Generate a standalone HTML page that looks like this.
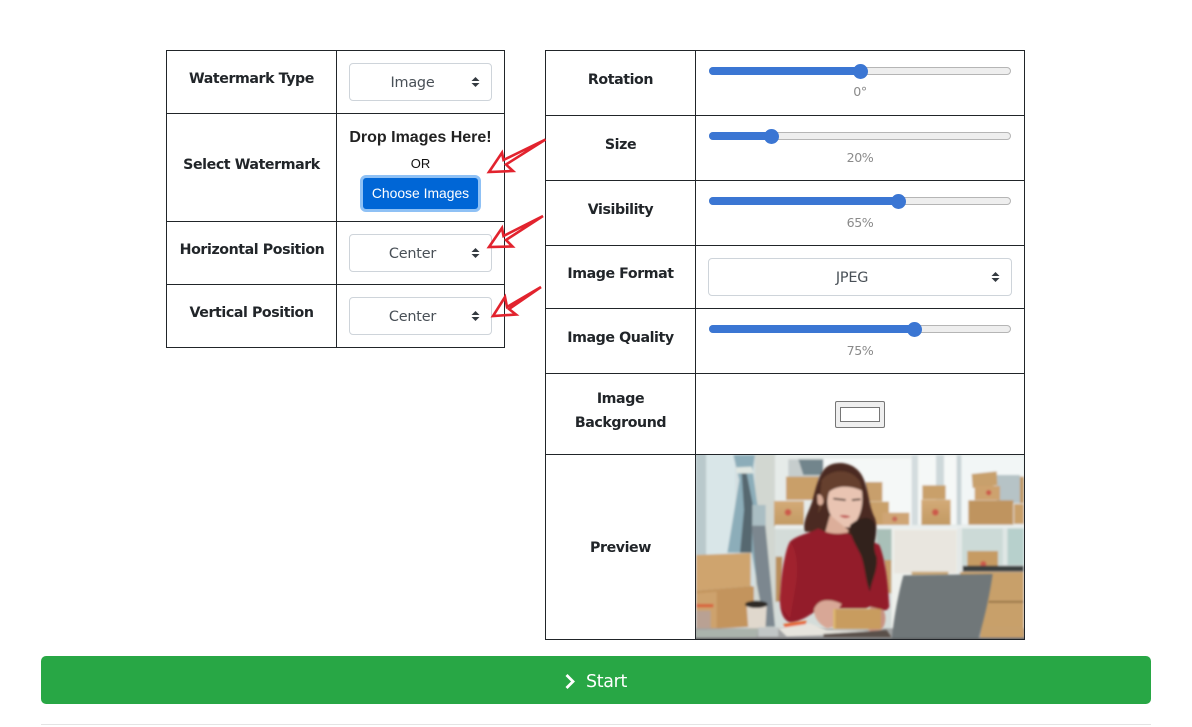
<!DOCTYPE html>
<html lang="en"><head><meta charset="utf-8"><title>Watermark</title>
<style>
html,body{margin:0;padding:0;background:#fff;}
body{width:1192px;height:727px;position:relative;overflow:hidden;font-family:"DejaVu Sans","Liberation Sans",sans-serif;color:#212529;}
.l{position:absolute;background:#212529;}
.t{position:absolute;text-align:center;font-weight:bold;font-size:14.2px;line-height:24px;letter-spacing:-.42px;white-space:nowrap;color:#212529;}
.sel{position:absolute;box-sizing:border-box;background:#fff;border:1px solid #ced4da;border-radius:4px;color:#495057;font-size:14.4px;letter-spacing:-.2px;text-align:center;line-height:38px;}
.sel svg{position:absolute;right:11px;top:12px;}
.tr{position:absolute;height:8px;left:709px;width:302px;box-sizing:border-box;background:#eee;border:1px solid #b5b5b5;border-radius:5px;}
.fill{position:absolute;left:709px;height:8px;background:#3b76d3;border-radius:5px 0 0 5px;}
.th{position:absolute;width:15px;height:15px;border-radius:50%;background:#3b76d3;}
.v{position:absolute;left:709px;width:302px;text-align:center;font-size:12.6px;line-height:18px;letter-spacing:-.45px;color:#8a8a8a;margin-top:1px;}
</style></head><body>

<!-- left table -->
<div class="l" style="left:166px;top:50px;width:339px;height:1px"></div>
<div class="l" style="left:166px;top:113px;width:339px;height:1px"></div>
<div class="l" style="left:166px;top:221px;width:339px;height:1px"></div>
<div class="l" style="left:166px;top:284px;width:339px;height:1px"></div>
<div class="l" style="left:166px;top:347px;width:339px;height:1px"></div>
<div class="l" style="left:166px;top:50px;width:1px;height:298px"></div>
<div class="l" style="left:336px;top:50px;width:1px;height:298px"></div>
<div class="l" style="left:504px;top:50px;width:1px;height:298px"></div>

<div class="t" style="left:167px;width:169px;top:67px">Watermark Type</div>
<div class="t" style="left:167px;width:169px;top:153px">Select Watermark</div>
<div class="t" style="left:167.500px;width:169px;top:238px">Horizontal Position</div>
<div class="t" style="left:167px;width:169px;top:301px">Vertical Position</div>

<div class="sel" style="left:349px;top:63px;width:143px;height:38px;padding-right:16px">Image<svg width="9" height="12" viewBox="0 0 9 12"><path d="M4.5 1L8.500 5H.5zM4.500 11L8.500 7H.5z" fill="#343a40"/></svg></div>
<div class="sel" style="left:349px;top:234px;width:143px;height:38px;padding-right:16px">Center<svg width="9" height="12" viewBox="0 0 9 12"><path d="M4.5 1L8.500 5H.5zM4.500 11L8.500 7H.5z" fill="#343a40"/></svg></div>
<div class="sel" style="left:349px;top:297px;width:143px;height:38px;padding-right:16px">Center<svg width="9" height="12" viewBox="0 0 9 12"><path d="M4.5 1L8.500 5H.5zM4.500 11L8.500 7H.5z" fill="#343a40"/></svg></div>

<div style="position:absolute;left:337px;width:167px;top:126px;text-align:center;font:bold 16px/24px 'Liberation Sans',sans-serif;color:#222;white-space:nowrap">Drop Images Here!</div>
<div style="position:absolute;left:337px;width:167px;top:155px;text-align:center;font:13px/18px 'Liberation Sans',sans-serif;color:#111">OR</div>
<div style="position:absolute;left:360px;top:175px;width:121px;height:37px;box-sizing:border-box;background:#0066d6;border:3px solid #8fc1f5;border-radius:6px;color:#fff;text-align:center;font:13.900px/30px 'Liberation Sans',sans-serif">Choose Images</div>

<!-- right table -->
<div class="l" style="left:545px;top:50px;width:480px;height:1px"></div>
<div class="l" style="left:545px;top:115px;width:480px;height:1px"></div>
<div class="l" style="left:545px;top:180px;width:480px;height:1px"></div>
<div class="l" style="left:545px;top:245px;width:480px;height:1px"></div>
<div class="l" style="left:545px;top:308px;width:480px;height:1px"></div>
<div class="l" style="left:545px;top:373px;width:480px;height:1px"></div>
<div class="l" style="left:545px;top:454px;width:480px;height:1px"></div>
<div class="l" style="left:545px;top:639px;width:480px;height:1px"></div>
<div class="l" style="left:545px;top:50px;width:1px;height:590px"></div>
<div class="l" style="left:695px;top:50px;width:1px;height:590px"></div>
<div class="l" style="left:1024px;top:50px;width:1px;height:590px"></div>

<div class="t" style="left:546px;width:149px;top:68px">Rotation</div>
<div class="t" style="left:546px;width:149px;top:133px">Size</div>
<div class="t" style="left:546px;width:149px;top:198px">Visibility</div>
<div class="t" style="left:546px;width:149px;top:262px">Image Format</div>
<div class="t" style="left:546px;width:149px;top:326px">Image Quality</div>
<div class="t" style="left:546px;width:149px;top:387px">Image</div>
<div class="t" style="left:546px;width:149px;top:411px">Background</div>
<div class="t" style="left:546px;width:149px;top:536px">Preview</div>

<div class="tr" style="top:67px"></div><div class="fill" style="top:67px;width:151px"></div><div class="th" style="left:853px;top:63.500px"></div><div class="v" style="top:82px">0°</div>
<div class="tr" style="top:132px"></div><div class="fill" style="top:132px;width:62px"></div><div class="th" style="left:763.500px;top:128.500px"></div><div class="v" style="top:148px">20%</div>
<div class="tr" style="top:197px"></div><div class="fill" style="top:197px;width:189px"></div><div class="th" style="left:890.500px;top:193.500px"></div><div class="v" style="top:213px">65%</div>
<div class="sel" style="left:708px;top:258px;width:304px;height:38px;padding-right:16px">JPEG<svg width="9" height="12" viewBox="0 0 9 12"><path d="M4.5 1L8.500 5H.5zM4.500 11L8.500 7H.5z" fill="#343a40"/></svg></div>
<div class="tr" style="top:325px"></div><div class="fill" style="top:325px;width:205px"></div><div class="th" style="left:906.500px;top:321.500px"></div><div class="v" style="top:341px">75%</div>

<div style="position:absolute;left:835px;top:401px;width:50px;height:27px;box-sizing:border-box;background:#efefef;border:1px solid #767676;border-radius:2px"></div>
<div style="position:absolute;left:840px;top:407px;width:40px;height:15px;box-sizing:border-box;background:#fff;border:1px solid #767676"></div>

<!-- preview image (drawn illustration) -->
<div style="position:absolute;left:696px;top:455px;width:328px;height:184px;overflow:hidden">
<svg style="position:absolute;left:-6px;top:-5px" width="340" height="195" viewBox="0 0 1020 585">
<defs>
<filter id="b" x="-5%" y="-5%" width="110%" height="110%"><feGaussianBlur stdDeviation="3"/></filter>
<linearGradient id="box" x1="0" x2="0" y1="0" y2="1"><stop offset="0" stop-color="#d3aa77"/><stop offset="1" stop-color="#c29a63"/></linearGradient>
</defs>
<g filter="url(#b)">
<rect x="0" y="0" width="1020" height="585" fill="#eef2f2"/>
<!-- wall -->
<rect x="0" y="0" width="260" height="585" fill="#d3dfe1"/>
<rect x="18" y="0" width="30" height="320" fill="#b9c9cc"/>
<rect x="50" y="0" width="85" height="320" fill="#d9e6e8"/>
<rect x="195" y="0" width="60" height="540" fill="#d2d7d1"/>
<!-- curtain -->
<path d="M130 15H195L188 60L200 150L215 240L235 340L255 530H225L185 308H112L130 200L148 90Z" fill="#8cadb9"/>
<path d="M155 70L170 70L188 160L185 308H150L162 180Z" fill="#566770"/>
<path d="M185 225L226 225L255 530H225L200 400Z" fill="#7c878f"/>
<path d="M138 52L185 50L190 70L140 70Z" fill="#dfe6e1"/>
<rect x="187" y="165" width="40" height="62" fill="#aabec3"/>
<!-- shelves background -->
<rect x="255" y="15" width="750" height="215" fill="#e6ebe9"/>
<rect x="295" y="28" width="105" height="60" fill="#c6cdcd"/>
<path d="M325 28H400V75H340Z" fill="#72858c"/>
<rect x="400" y="25" width="270" height="200" fill="#f5f8f7"/>
<rect x="685" y="18" width="120" height="205" fill="#f5f8f7"/>
<rect x="810" y="18" width="192" height="205" fill="#f2f6f6"/>
<rect x="665" y="15" width="18" height="215" fill="#d3dcde"/>
<rect x="738" y="15" width="24" height="215" fill="#cdd8da"/>
<rect x="800" y="15" width="14" height="215" fill="#c8d3d6"/>
<rect x="920" y="75" width="70" height="85" fill="#b6c3c6"/>
<!-- boxes top -->
<rect x="288" y="80" width="100" height="70" fill="#c99f69"/>
<rect x="252" y="153" width="90" height="76" fill="url(#box)"/>
<circle cx="294" cy="187" r="10" fill="#cc5a4c"/>
<rect x="525" y="96" width="52" height="58" fill="#c89f6c"/>
<rect x="535" y="155" width="62" height="70" fill="#c9a06b"/>
<rect x="578" y="188" width="80" height="38" fill="#cfa574"/>
<circle cx="614" cy="207" r="8" fill="#c86a5a"/>
<rect x="697" y="106" width="70" height="42" fill="#c9a06b"/>
<rect x="694" y="149" width="88" height="76" fill="url(#box)"/>
<circle cx="736" cy="187" r="10" fill="#cc5a4c"/>
<path d="M845 72L920 64L922 106L848 114Z" fill="#c8a06c"/>
<rect x="854" y="108" width="76" height="42" fill="#cda26e"/>
<circle cx="896" cy="128" r="8" fill="#cc5a4c"/>
<rect x="835" y="151" width="135" height="73" fill="#bf945f"/>
<rect x="972" y="162" width="30" height="60" fill="#c9a06b"/>
<rect x="990" y="80" width="12" height="80" fill="#c19860"/>
<!-- shelf lower -->
<rect x="255" y="225" width="747" height="12" fill="#e9eeed"/>
<rect x="255" y="237" width="350" height="300" fill="#d4dcd9"/>
<rect x="560" y="237" width="45" height="100" fill="#a9c0b8"/>
<rect x="257" y="320" width="20" height="135" fill="#b98f5b"/>
<rect x="582" y="330" width="22" height="100" fill="#c59c68"/>
<rect x="605" y="235" width="205" height="300" fill="#eef0ec"/>
<rect x="612" y="240" width="188" height="130" fill="#e9e6df"/>
<rect x="802" y="235" width="16" height="300" fill="#e3e8e7"/>
<rect x="816" y="235" width="124" height="110" fill="#ccdad7"/>
<rect x="952" y="235" width="50" height="110" fill="#b7d0cc"/>
<rect x="938" y="235" width="14" height="110" fill="#dfe6e5"/>
<rect x="832" y="303" width="92" height="48" fill="#c69b64"/>
<circle cx="880" cy="342" r="9" fill="#cc5a4c"/>
<rect x="818" y="347" width="184" height="18" fill="#3a3f40"/>
<rect x="810" y="366" width="192" height="200" fill="#c8a06b"/>
<path d="M895 458H1002V453H895Z" fill="#8c6a3e"/>
<rect x="665" y="365" width="110" height="15" fill="#c9a878"/>
<!-- left boxes -->
<path d="M18 315L182 309V408L18 422Z" fill="#cfa46e"/>
<path d="M18 422L182 408L192 410V530L80 536L18 540V430Z" fill="#c3945d"/>
<path d="M18 430L80 425V536L18 540Z" fill="#cda26d"/>
<rect x="18" y="462" width="52" height="10" fill="#d8653c"/>
<rect x="18" y="482" width="44" height="56" fill="#b9a193"/>
<!-- cup -->
<path d="M170 468H230L226 538H175Z" fill="#e0d8cd"/>
<ellipse cx="199" cy="463" rx="34" ry="11" fill="#2f2a28"/>
<!-- desk -->
<rect x="0" y="535" width="1020" height="50" fill="#a0a2a2"/>
<path d="M18 540L205 535L200 562L18 566Z" fill="#aab3ac"/>
<rect x="205" y="532" width="60" height="28" fill="#c1c6c6"/>
<rect x="870" y="535" width="132" height="30" fill="#c8a06b"/>
</g>
<!-- woman -->
<g filter="url(#b)">
<path d="M405 55C430 30 490 32 515 75C538 115 535 170 555 205C565 235 555 270 540 300L440 250L345 245C335 215 358 185 368 150C378 110 388 72 405 55Z" fill="#4b2c22"/>
<path d="M395 90C420 58 480 50 510 95L520 135L420 122L385 190Z" fill="#66402f"/>
<path d="M418 125C450 100 495 112 515 122C522 165 510 205 487 228C465 240 440 225 425 200C412 180 408 150 418 125Z" fill="#e9c4b2"/>
<path d="M382 135C390 128 400 140 400 155C398 168 388 168 383 160Z" fill="#dbae9a"/>
<path d="M432 146L465 150M488 150L510 148" stroke="#3d2a23" stroke-width="5" stroke-linecap="round"/>
<path d="M448 197Q465 192 482 200Q466 210 448 197Z" fill="#c25b59"/>
<path d="M420 195L475 240L470 262L405 250Z" fill="#dcae9a"/>
<path d="M385 235C410 250 440 255 470 248C500 270 545 270 568 285C590 340 595 420 598 470C590 490 570 480 540 470L528 475H400C370 480 345 515 300 517C275 510 265 470 272 420C280 350 285 300 300 275C320 255 360 250 385 235Z" fill="#931f2c"/>
<path d="M300 275C320 300 325 350 318 400L300 505L272 470C268 400 280 320 300 275Z" fill="#a0242f"/>
<path d="M480 225C510 200 550 190 558 235C560 270 545 285 560 320C565 360 545 390 540 425C525 390 525 340 510 310C495 280 480 260 480 225Z" fill="#33211c"/>
<path d="M372 478C385 445 420 445 455 462L440 485L432 530L412 535C390 525 372 505 372 478Z" fill="#d8a796"/>
<path d="M540 470L580 480C592 500 585 535 570 540L535 545Z" fill="#c79383"/>
<rect x="430" y="477" width="143" height="60" fill="#c89c5e"/>
<rect x="430" y="477" width="6" height="60" fill="#dfb96e"/>
<path d="M280 522L350 512L345 530L285 535Z" fill="#e7622c"/>
<path d="M265 535L360 520L410 540L540 542L535 552L420 555L290 560Z" fill="#e6e4dd"/>
<path d="M400 552L590 540L605 562H400Z" fill="#5a5048"/>
</g>
<!-- laptop -->
<g filter="url(#b)">
<path d="M640 376L908 372C900 430 885 500 865 566H605C612 500 625 430 640 376Z" fill="#6f7779"/>
<rect x="0" y="564" width="1020" height="21" fill="#5f6162"/>
</g>
</svg>
</div>

<!-- red arrows -->
<svg style="position:absolute;left:0;top:0;pointer-events:none" width="1192" height="727" viewBox="0 0 1192 727">
<g fill="none" stroke="#e2232e" stroke-width="2.600" stroke-linejoin="miter">
<path d="M545.500 139.500L503.500 160L502 152.700L489 172L513 171L506 164.500L545.500 139.500Z"/>
<path d="M543 216L503.500 236L502 228L489 247L512.500 246.500L506 240L543 216Z"/>
<path d="M541 287L507 307L505 297L493 316L516 314.500L509 309L541 287Z"/>
</g>
</svg>

<!-- start button -->
<div style="position:absolute;left:41px;top:656px;width:1110px;height:48px;background:#28a745;border-radius:5px"></div>
<svg style="position:absolute;left:563px;top:672px" width="14" height="18" viewBox="0 0 14 18"><path d="M3.500 3L10 9.500L3.500 16" fill="none" stroke="#fff" stroke-width="2.800"/></svg>
<div style="position:absolute;left:586px;top:669px;font-size:17.400px;line-height:26px;letter-spacing:-.3px;color:#fff;white-space:nowrap">Start</div>
<div style="position:absolute;left:41px;top:724px;width:1110px;height:1px;background:#e4e4e4"></div>
</body></html>
